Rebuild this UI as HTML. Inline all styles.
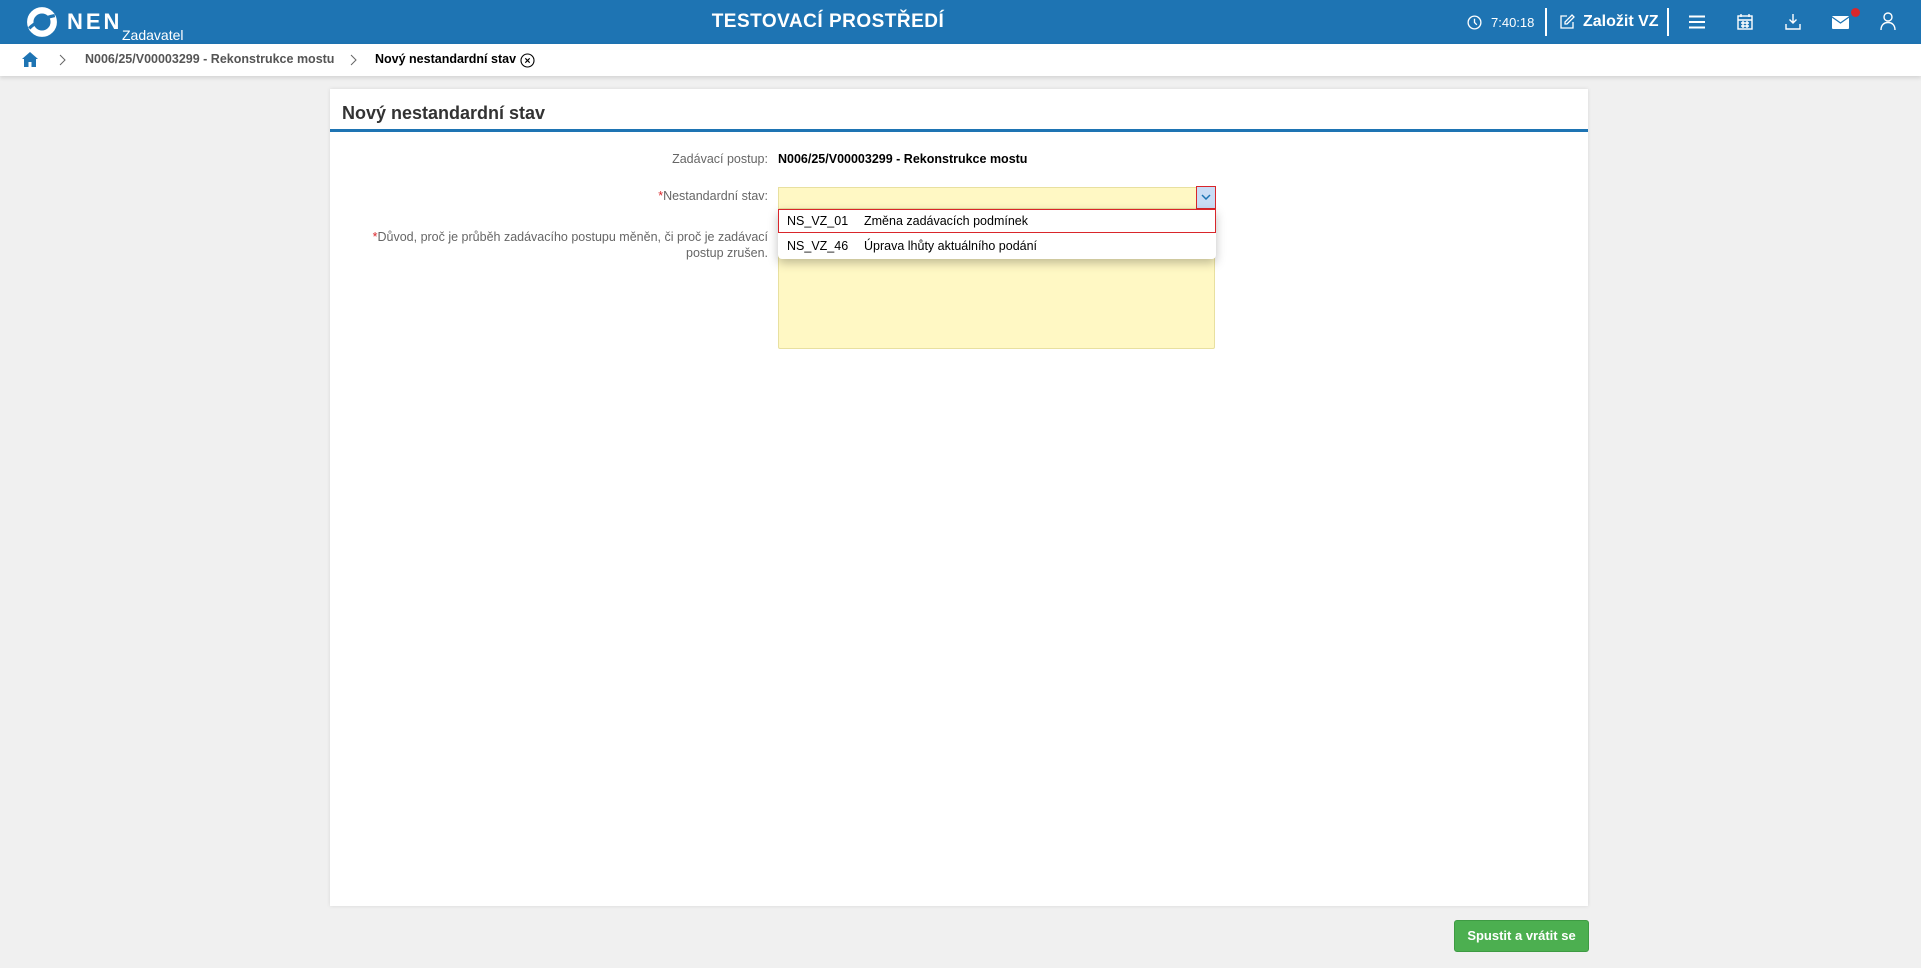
<!DOCTYPE html>
<html><head><meta charset="utf-8"><style>
*{box-sizing:border-box;margin:0;padding:0}
body{width:1921px;height:968px;background:#f0f0f0;font-family:"Liberation Sans",sans-serif;position:relative;overflow:hidden}
.hdr{position:absolute;left:0;top:0;width:1921px;height:44px;background:#1e74b3;color:#fff}
.bc{position:absolute;left:0;top:44px;width:1921px;height:32px;background:#fff;box-shadow:0 2px 4px rgba(0,0,0,.12);font-size:12.5px;font-weight:bold}
.abs{position:absolute}
.card{position:absolute;left:330px;top:89px;width:1258px;height:817px;background:#fff;box-shadow:0 0 4px rgba(0,0,0,.1)}
.lbl{position:absolute;right:0;font-size:12.5px;color:#666;text-align:right}
</style></head><body>
<div class="hdr">
 <svg class="abs" style="left:26px;top:6px" width="32" height="32" viewBox="0 0 30 30"><circle cx="15" cy="15" r="11" fill="none" stroke="#fff" stroke-width="6"/><path d="M3 21 Q12 12 27 9" stroke="#1e74b3" stroke-width="3" fill="none"/></svg>
 <div class="abs" style="left:67px;top:9px;font-size:22px;font-weight:bold;letter-spacing:3px">NEN</div>
 <div class="abs" style="left:122px;top:27px;font-size:14px">Zadavatel</div>
 <div class="abs" style="left:0;width:1656px;top:11px;text-align:center;font-size:19px;font-weight:bold;letter-spacing:.5px">TESTOVACÍ PROSTŘEDÍ</div>
 <svg class="abs" style="left:1467px;top:15px" width="15" height="15" viewBox="0 0 16 16"><circle cx="8" cy="8" r="6.8" fill="none" stroke="#fff" stroke-width="1.4"/><path d="M8 4v4l2.5 2.5" stroke="#fff" stroke-width="1.4" fill="none"/></svg>
 <div class="abs" style="left:1491px;top:15px;font-size:13px">7:40:18</div>
 <div class="abs" style="left:1545px;top:8px;width:2px;height:28px;background:#fff"></div>
 <svg class="abs" style="left:1559px;top:14px" width="16" height="16" viewBox="0 0 16 16" fill="none" stroke="#fff" stroke-width="1.3"><path d="M8 2H2v12h12V8"/><path d="M13 1l2 2-7 7H6V8z"/></svg>
 <div class="abs" style="left:1583px;top:13px;font-size:16px;font-weight:bold">Založit VZ</div>
 <div class="abs" style="left:1667px;top:8px;width:2px;height:28px;background:#fff"></div>
 <svg class="abs" style="left:1689px;top:15px" width="16" height="14"><path d="M0 1.5h16M0 7h16M0 12.5h16" stroke="#fff" stroke-width="2"/></svg>
 <svg class="abs" style="left:1737px;top:13px" width="16" height="17" viewBox="0 0 16 17" fill="none" stroke="#fff" stroke-width="1.4"><rect x="1" y="3" width="14" height="13"/><path d="M4 1v3M12 1v3M1 7h14M4 10h8M4 13h8M6 8v7M10 8v7"/></svg>
 <svg class="abs" style="left:1785px;top:13px" width="16" height="17" viewBox="0 0 16 17" fill="none" stroke="#fff" stroke-width="1.4"><path d="M8 1v9M4.5 6.5 8 10l3.5-3.5M1 11v5h14v-5"/></svg>
 <svg class="abs" style="left:1832px;top:16px" width="17" height="13" viewBox="0 0 17 13"><rect x="0" y="0" width="17" height="13" rx="1" fill="#fff"/><path d="M0 1l8.5 6L17 1" stroke="#1e74b3" stroke-width="1.3" fill="none"/></svg>
 <div class="abs" style="left:1851px;top:8px;width:9px;height:9px;border-radius:50%;background:#d9262b"></div>
 <svg class="abs" style="left:1880px;top:12px" width="16" height="18" viewBox="0 0 16 18" fill="none" stroke="#fff" stroke-width="1.4"><circle cx="8" cy="5" r="4"/><path d="M1 18c0-5 3-7.5 7-7.5s7 2.5 7 7.5"/></svg>
</div>
<div class="bc">
 <svg class="abs" style="left:22px;top:8px" width="16" height="15" viewBox="0 0 16 15"><path d="M8 0L0 7h2v8h4.5v-5h3v5H14V7h2z" fill="#1e74b3"/></svg>
 <svg class="abs" style="left:59px;top:10px" width="7" height="12"><path d="M1 1l5 5-5 5" stroke="#666" fill="none"/></svg>
 <div class="abs" style="left:85px;top:8px;color:#555">N006/25/V00003299 - Rekonstrukce mostu</div>
 <svg class="abs" style="left:350px;top:10px" width="7" height="12"><path d="M1 1l5 5-5 5" stroke="#666" fill="none"/></svg>
 <div class="abs" style="left:375px;top:8px;color:#000">Nový nestandardní stav</div>
 <svg class="abs" style="left:520px;top:9px" width="15" height="15" viewBox="0 0 15 15" fill="none" stroke="#000" stroke-width="1.1"><circle cx="7.5" cy="7.5" r="6.5"/><path d="M5.3 5.3l4.4 4.4M9.7 5.3l-4.4 4.4"/></svg>
</div>
<div class="card">
 <div class="abs" style="left:12px;top:14px;font-size:18px;font-weight:bold;color:#333">Nový nestandardní stav</div>
 <div class="abs" style="left:0;top:40px;width:1258px;height:3px;background:#1e74b3"></div>
 <div class="lbl" style="left:0;width:438px;top:63px">Zadávací postup:</div>
 <div class="abs" style="left:448px;top:63px;font-size:12.5px;font-weight:bold;color:#000">N006/25/V00003299 - Rekonstrukce mostu</div>
 <div class="lbl" style="left:0;width:438px;top:100px"><span style="color:#d9262b">*</span>Nestandardní stav:</div>
 <div class="abs" style="left:448px;top:98px;width:437px;height:22px;background:#fff8c4;border:1px solid #e8e0a0"></div>
 <div class="abs" style="left:866px;top:97px;width:20px;height:23px;border:1.5px solid #d9262b;background:#c9dcf5"><svg style="position:absolute;left:4px;top:7px" width="10" height="6"><path d="M1 1l4 4 4-4" stroke="#1e74b3" stroke-width="1.5" fill="none"/></svg></div>
 <div class="lbl" style="left:0;width:438px;top:140px;line-height:16px">
 <span style="color:#d9262b">*</span>Důvod, proč je průběh zadávacího postupu měněn, či proč je zadávací<br>postup zrušen.</div>
 <div class="abs" style="left:448px;top:132px;width:437px;height:128px;background:#fff8c4;border:1px solid #e8e0a0;border-radius:2px"></div>
 <div class="abs" style="left:448px;top:120px;width:438px;height:50px;background:#fff;box-shadow:0 4px 10px rgba(0,0,0,.25);border-radius:0 0 4px 4px;font-size:12.5px;color:#000">
  <div class="abs" style="left:0;top:0;width:438px;height:24px;border:1.5px solid #d9262b"></div>
  <div class="abs" style="left:9px;top:5px">NS_VZ_01</div><div class="abs" style="left:86px;top:5px">Změna zadávacích podmínek</div>
  <div class="abs" style="left:9px;top:30px">NS_VZ_46</div><div class="abs" style="left:86px;top:30px">Úprava lhůty aktuálního podání</div>
 </div>
</div>
<div class="abs" style="left:1454px;top:920px;width:135px;height:32px;background:#4caf50;border:1px solid #3e9b43;border-radius:3px;color:#fff;font-size:13px;font-weight:bold;text-align:center;line-height:30px">Spustit a vrátit se</div>
</body></html>
